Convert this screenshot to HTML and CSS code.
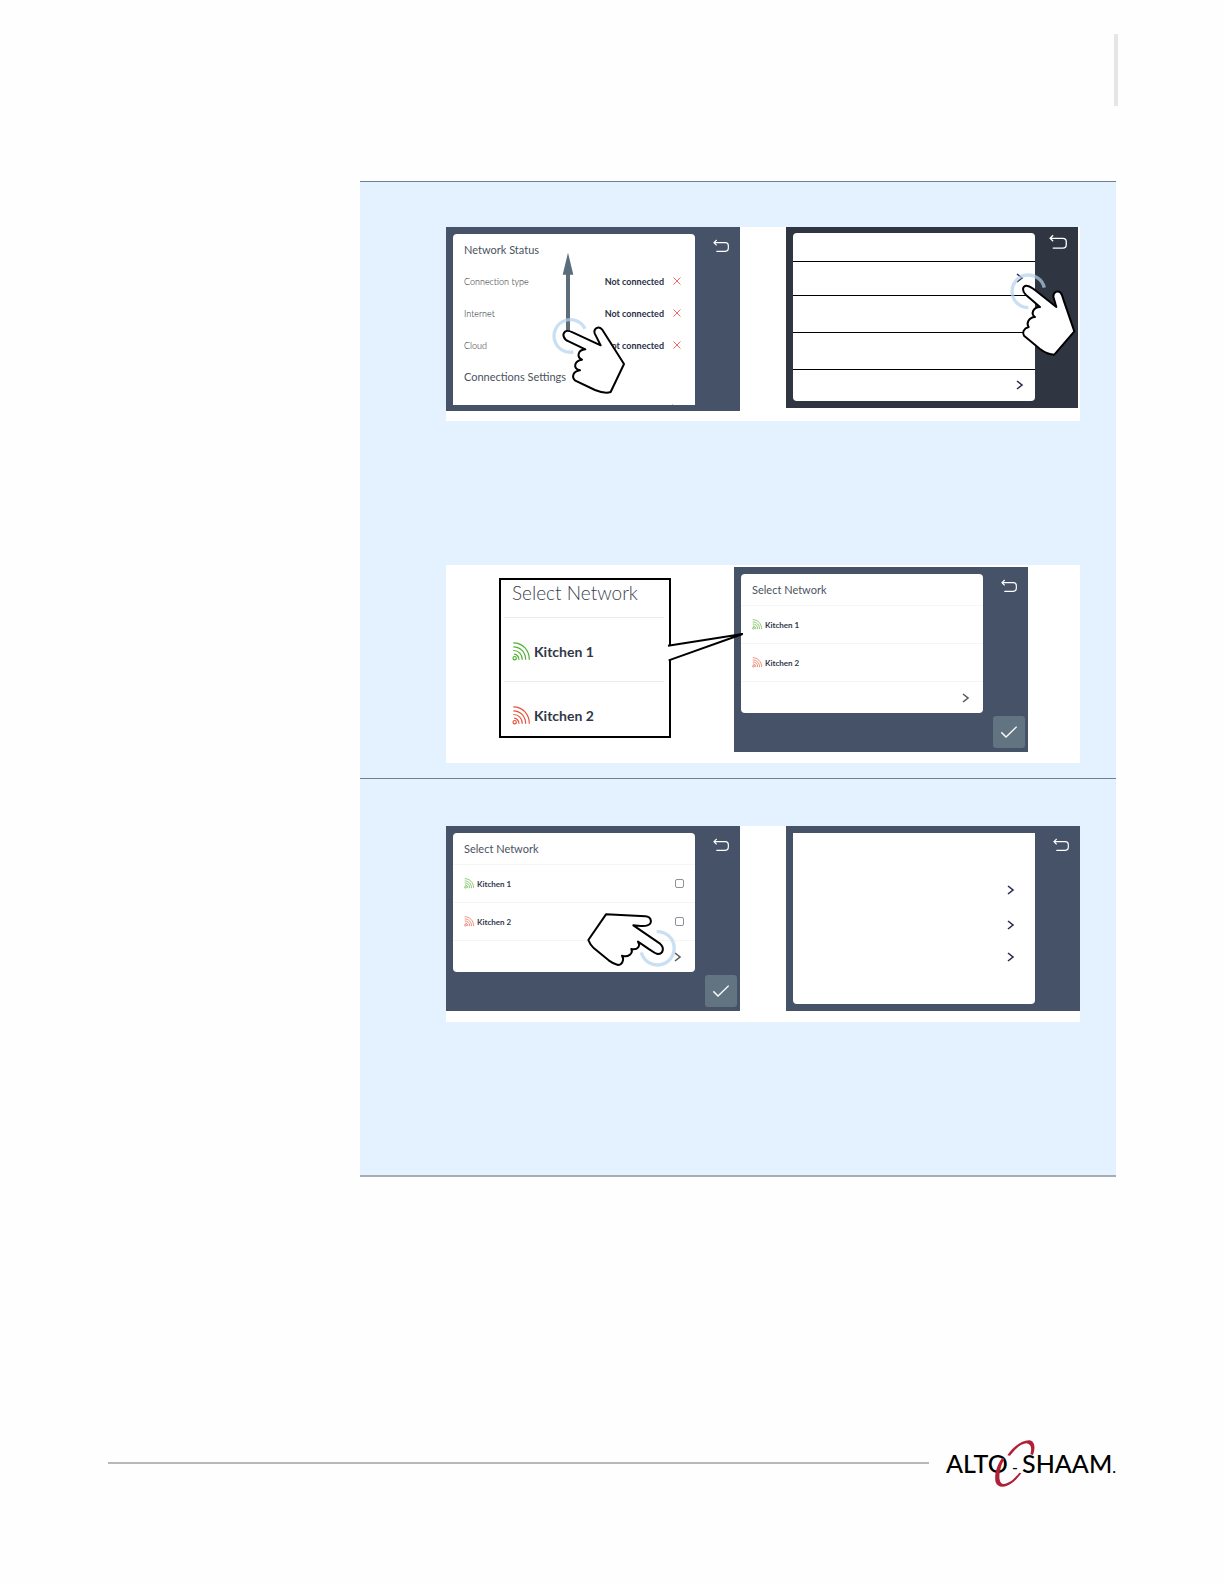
FILE: index.html
```html
<!DOCTYPE html>
<html lang="en">
<head>
<meta charset="utf-8">
<title>Alto-Shaam network setup</title>
<link rel="stylesheet" href="styles.css">
</head>
<body>
<svg width="0" height="0" class="defs" aria-hidden="true">
  <symbol id="back" viewBox="0 0 48 39"><path d="M11 3 3 11l8 8M3 11h34q9 0 9 9v8q0 9-9 9H10" fill="none" stroke="#fff" stroke-width="3.5"/></symbol>
  <symbol id="chevron" viewBox="0 0 8 10"><path d="M1 1l5 4-5 4" fill="none" stroke="currentColor" stroke-width="1.6"/></symbol>
  <symbol id="check" viewBox="0 0 48 36"><path d="M1 19l14 14L47 2" fill="none" stroke="#fff" stroke-width="4"/></symbol>
  <symbol id="cross" viewBox="0 0 8 8"><path d="M.5.5l7 7M7.500.5l-7 7" fill="none" stroke="#ee6a5e" stroke-width="1"/></symbol>
  <symbol id="signal" viewBox="0 0 54 56"><g fill="none" stroke="currentColor" stroke-width="3.500"><circle cx="8" cy="48" r="5"/><path d="M4 2c28 0 48 22 48 51M4 14c22 0 37 17 37 39M4 25c16 0 27 12 27 28M6 36c8 0 15 7 15 17"/></g></symbol>
</svg>
<div class="page">
  <header class="header"></header>
  <main class="steps">
    <section class="step step-connect">
      <div class="figure">
        <div class="device">
          <div class="card status">
            <h2 class="title">Network Status</h2>
            <div class="entry"><span>Connection type</span><b>Not connected</b><svg class="cross"><use href="#cross"/></svg></div>
            <div class="entry"><span>Internet</span><b>Not connected</b><svg class="cross"><use href="#cross"/></svg></div>
            <div class="entry"><span>Cloud</span><b>Not connected</b><svg class="cross"><use href="#cross"/></svg></div>
            <h2 class="title">Connections Settings</h2>
            <div class="cut"><svg class="chevron"><use href="#chevron"/></svg></div>
          </div>
          <div class="side"><button class="back" aria-label="Back"><svg><use href="#back"/></svg></button></div>
          <svg class="hand hand-swipe" viewBox="600 240 240 441">
            <path d="M654 248l16 66h-10v170h-12V314h-10z" fill="#5b6d7b"/>
            <path d="M705 476A49 49 0 1 0 670 546" class="ring"/>
            <path class="glove" d="M706 538L656 514C640 508 636 492 645 485C652 480 660 483 668 487L752 526L734 490C730 476 745 466 756 478L822 582L782 666C770 670 750 666 735 660L676 632C664 622 668 604 690 601C668 596 672 572 696 569C680 562 682 540 706 538Z"/>
          </svg>
        </div>
        <div class="device dark">
          <div class="card ruled">
            <div></div>
            <div><button class="go" aria-label="Open first setting"><svg class="chevron"><use href="#chevron"/></svg></button></div>
            <div></div>
            <div></div>
            <div><button class="go" aria-label="Open last setting"><svg class="chevron"><use href="#chevron"/></svg></button></div>
          </div>
          <div class="side"><button class="back" aria-label="Back"><svg><use href="#back"/></svg></button></div>
          <svg class="hand hand-tap" viewBox="720 300 210 270">
            <path d="M823 353A49 49 0 1 0 775 413" class="ring"/>
            <path class="glove" d="M810 411L768 375C755 362 757 349 768 347C778 346 785 353 792 358L859 411L850 380C850 366 862 360 872 368C876 374 878 380 880 388L913 484L853 554C838 554 822 546 810 537L762 497C756 488 760 476 776 471C768 460 776 442 795 441C782 432 788 412 810 411Z"/>
          </svg>
        </div>
      </div>
      <div class="figure figure-callout">
        <div class="callout">
          <h2>Select Network</h2>
          <div class="network good"><svg><use href="#signal"/></svg><b>Kitchen 1</b></div>
          <div class="network poor"><svg><use href="#signal"/></svg><b>Kitchen 2</b></div>
          <svg class="pointer" viewBox="681 225 240 99"><path d="M684 272L908 237L686 316" fill="#fff" stroke="#000" stroke-width="6"/></svg>
        </div>
        <div class="device tall">
          <div class="card select">
            <h2 class="title">Select Network</h2>
            <div class="network good"><svg><use href="#signal"/></svg><b>Kitchen 1</b></div>
            <div class="network poor"><svg><use href="#signal"/></svg><b>Kitchen 2</b></div>
            <div class="more"><button class="go" aria-label="More networks"><svg class="chevron"><use href="#chevron"/></svg></button></div>
          </div>
          <div class="side"><button class="back" aria-label="Back"><svg><use href="#back"/></svg></button><button class="confirm" aria-label="Confirm"><svg><use href="#check"/></svg></button></div>
        </div>
      </div>
    </section>
    <section class="step step-select">
      <div class="figure">
        <div class="device tall">
          <div class="card select">
            <h2 class="title">Select Network</h2>
            <div class="network good"><svg><use href="#signal"/></svg><label for="k1">Kitchen 1</label><input type="checkbox" id="k1"></div>
            <div class="network poor"><svg><use href="#signal"/></svg><label for="k2">Kitchen 2</label><input type="checkbox" id="k2"></div>
            <div class="more"><button class="go" aria-label="More networks"><svg class="chevron"><use href="#chevron"/></svg></button></div>
          </div>
          <div class="side"><button class="back" aria-label="Back"><svg><use href="#back"/></svg></button><button class="confirm" aria-label="Confirm"><svg><use href="#check"/></svg></button></div>
          <svg class="hand hand-point" viewBox="429 279 285 195">
            <path d="M650 350A50 50 0 1 1 604 412" class="ring"/>
            <path class="glove" d="M498 298L616 304C636 306 638 326 622 331C612 336 598 332 580 331L660 386C674 398 670 416 654 417C646 417 636 408 628 403L594 380C602 392 594 406 574 402C580 416 564 428 546 422C554 434 546 450 534 450C524 448 514 442 506 436L462 400C454 392 448 384 445 375Z"/>
          </svg>
        </div>
        <div class="device tall">
          <div class="card blank">
            <div></div>
            <div><button class="go" aria-label="Open setting 1"><svg class="chevron"><use href="#chevron"/></svg></button></div>
            <div><button class="go" aria-label="Open setting 2"><svg class="chevron"><use href="#chevron"/></svg></button></div>
            <div><button class="go" aria-label="Open setting 3"><svg class="chevron"><use href="#chevron"/></svg></button></div>
          </div>
          <div class="side"><button class="back" aria-label="Back"><svg><use href="#back"/></svg></button></div>
        </div>
      </div>
    </section>
  </main>
  <footer class="footer">
    <hr>
    <div class="logo">
      <span>ALTO</span><span class="dash">-</span><span>SHAAM<small>.</small></span>
      <svg viewBox="222 57 126 147" aria-hidden="true"><g fill="#b01f35"><path d="M262 106C280 80 306 60 328 61C346 64 346 85 339 105L331 103C336 86 334 72 320 70C304 70 284 88 270 107Z"/><path d="M247 113C230 135 222 165 227 187C234 206 258 204 280 186C290 178 298 168 304 160L298 158C286 174 268 192 250 192C238 190 236 172 240 152C243 138 247 126 254 116Z"/></g></svg>
    </div>
  </footer>
</div>
</body>
</html>
```
FILE: styles.css
```css
* { box-sizing: border-box; }
body { margin: 0; background: #fefefe; font-family: Lato, sans-serif; color: #38424f; }
h2 { margin: 0; font-weight: 300; }
button { border: 0; padding: 0; background: none; color: inherit; display: flex; }
svg { display: block; }
.defs { position: absolute; }

.page { padding: 34px 108px 96px; }
.header { height: 72px; margin: 0 -2px 75px 0; border-right: 4px solid #e6e6e6; }

.steps { margin-left: 252px; border-bottom: 2px solid #a8acb8; }
.step { border-top: 1px solid #6f7f92; background: #e4f1ff; }
.step-connect { padding: 45px 36px 15px 86px; }
.step-select { padding: 47px 36px 153px 86px; }

.figure { display: flex; justify-content: space-between; align-items: flex-start; background: #fff; padding-bottom: 10px; }
.step-select .figure { padding-bottom: 11px; }
.figure-callout { justify-content: flex-start; margin-top: 144px; padding: 2px 52px 11px 53px; }
.figure-callout .device { margin-left: auto; }

.device { position: relative; display: flex; align-items: flex-start; width: 294px; min-height: 184px; padding: 7px 0 0 7px; background: #465268; }
.tall { min-height: 185px; }
.dark { width: 292px; min-height: 181px; margin-right: 2px; padding-top: 6px; background: #303641; }
.card { width: 242px; border-radius: 4px; background: #fff; display: grid; }
.status { grid-template-rows: 31px repeat(4, 32px) 12px; border-radius: 4px 4px 0 0; }
.select { grid-template-rows: 31px 38px 38px 32px; }
.ruled { grid-template-rows: 29px 34px 37px 37px 31px; }
.blank { grid-template-rows: 40px 35px 35px 29px; height: 171px; border-radius: 0 0 4px 4px; }
.ruled > div, .blank > div { display: flex; align-items: center; justify-content: flex-end; padding: 0 11px 2px 0; color: #272c4c; }
.blank > div { padding: 0 20px 1px 0; }
.ruled > div + div { border-top: 1px solid #000; }
.ruled > div:not(:first-child) { margin-top: -1px; }

.title { padding-left: 11px; font-size: 11px; line-height: 32px; font-weight: 400; color: #4a535f; }
.entry { display: flex; align-items: center; padding: 0 14px 0 11px; font-size: 9px; }
.entry span { font-weight: 300; color: #111925; }
.entry b { margin-left: auto; color: #2b3147; }
.cross { width: 8px; height: 8px; margin-left: 9px; }
.cut { overflow: hidden; padding: 11px 16px 0 0; display: flex; justify-content: flex-end; }
.chevron { width: 8px; height: 10px; flex: none; }

.network { display: flex; align-items: center; gap: 3px; padding: 0 11px; font-size: 8px; font-weight: 700; color: #2f3849; }
.network svg { width: 10px; height: 11px; }
.network input { appearance: none; width: 9px; height: 9px; margin: 0 0 0 auto; border: 1px solid #8d9095; border-radius: 2px; }
.network b, .network label { font-weight: 700; color: #2f3849; }
.good svg { color: #4fb02f; }
.poor svg { color: #e5533d; }
.select .network { border-top: 1px solid #f5f5f6; }
.more { display: flex; align-items: center; justify-content: flex-end; padding-right: 13px; border-top: 1px solid #f5f5f6; color: #555960; }

.side { flex: 1; align-self: stretch; display: flex; flex-direction: column; align-items: flex-end; justify-content: space-between; padding: 5px 3px 4px 0; }
.back { margin-right: 8px; }
.back svg { width: 16px; height: 13px; }
.dark .side { padding-top: 1px; }
.dark .back svg { width: 18px; height: 15px; }
.confirm { width: 32px; height: 32px; align-items: center; justify-content: center; border-radius: 3px; background: #627382; }
.confirm svg { width: 16px; height: 12px; }

.hand { position: absolute; }
.hand-swipe { left: 104px; top: 23px; width: 80px; height: 147px; }
.hand-tap { left: 224px; top: 43px; width: 70px; height: 90px; }
.hand-point { left: 137px; top: 82px; width: 95px; height: 65px; }
.ring { fill: none; stroke: #b4d2ec; stroke-width: 10; opacity: .7; }
.glove { fill: #fff; stroke: #000; stroke-width: 6; stroke-linejoin: round; }

.callout { position: relative; width: 172px; height: 160px; margin-top: 11px; border: 2px solid #000; padding: 0 5px 0 3px; display: grid; grid-template-rows: 37px 64px 1fr; }
.callout h2 { padding: 0 0 0 8px; font-size: 19px; line-height: 26px; }
.callout .network { padding: 3px 8px 0; gap: 4px; font-size: 14px; border-top: 1px solid #e9ebed; }
.callout .poor { padding-top: 12px; }
.callout .network svg { width: 18px; height: 19px; }
.callout .pointer { position: absolute; left: 166px; top: 50px; width: 80px; height: 33px; z-index: 1; }

.footer { display: flex; align-items: center; gap: 17px; margin-top: 261px; }
.footer hr { flex: 1; margin: 0; border: 0; height: 2px; background: #b8b8b8; }
.logo { position: relative; width: 170px; height: 50px; display: flex; align-items: baseline; justify-content: space-between; color: #000; font-size: 25px; font-weight: 500; line-height: 50px; }
.logo svg { position: absolute; left: 48px; top: 1px; width: 42px; height: 49px; }
.logo small { font-size: 16px; line-height: 1; }
.logo .dash { font-size: 16px; line-height: 1; }
```
